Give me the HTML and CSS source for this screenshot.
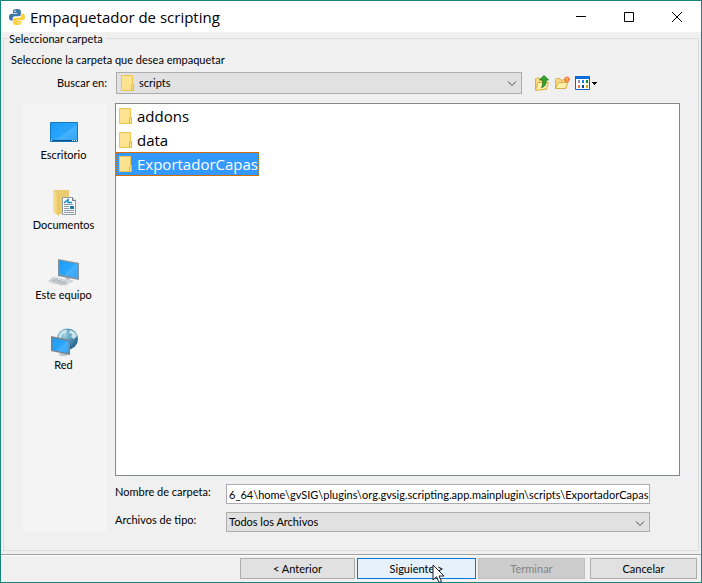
FILE: index.html
```html
<!DOCTYPE html>
<html lang="es">
<head>
<meta charset="utf-8">
<title>Empaquetador de scripting</title>
<link rel="stylesheet" href="styles.css">
</head>
<body>
<svg class="defs" aria-hidden="true">
  <defs>
    <linearGradient id="paper" x1="0" y1="0" x2="1" y2="1"><stop offset="0" stop-color="#ffe594"/><stop offset="1" stop-color="#fce08a"/></linearGradient>
    <linearGradient id="screen" x1="0" y1="0" x2="1" y2="1"><stop offset="0" stop-color="#1b9cf8"/><stop offset=".55" stop-color="#2ba6fb"/><stop offset=".56" stop-color="#45b2fd"/><stop offset="1" stop-color="#2fa5f8"/></linearGradient>
    <linearGradient id="flap" x1="0" y1="0" x2="1" y2="0"><stop offset="0" stop-color="#fbe6a2"/><stop offset="1" stop-color="#e9c25c"/></linearGradient>
    <radialGradient id="globe" cx=".35" cy=".3" r=".8"><stop offset="0" stop-color="#a6d3e6"/><stop offset=".5" stop-color="#4d94b6"/><stop offset="1" stop-color="#1d5c80"/></radialGradient>
    <symbol id="folder" viewBox="0 0 14 16">
      <path d="M.5.5h11v9h1v6H.5z" fill="url(#paper)" stroke="#efc64f"/>
      <path d="M10.500 15.500v-5l2-1v6z" fill="#ffe48c" stroke="#e5b93c"/>
    </symbol>
  </defs>
</svg>
<div class="window">
  <header class="titlebar">
    <svg class="logo" viewBox="0 0 16 16" aria-hidden="true">
      <path d="M8 0C5 0 4 .8 4 2.300V4h4.200v.7H2.500C.8 4.700 0 6 0 8s.8 3.600 2.200 3.600h1.500V9.500c0-1.300 1-2.200 2.300-2.200h3.700c1.200 0 2.200-.9 2.200-2v-3C11.900.8 10.500 0 8 0z" fill="#3b78a8"/>
      <path d="M8 16c3 0 4-.8 4-2.300V12H7.800v-.7h5.700c1.700 0 2.500-1.300 2.500-3.300s-.8-3.600-2.200-3.600h-1.500v2.100c0 1.300-1 2.200-2.300 2.200H6.300c-1.200 0-2.200.9-2.200 2v3C4.100 15.200 5.500 16 8 16z" fill="#fdd13e"/>
      <circle cx="6" cy="2.200" r=".8" fill="#fff"/><circle cx="10" cy="13.800" r=".8" fill="#fff"/>
    </svg>
    <h1>Empaquetador de scripting</h1>
    <div class="window-controls">
      <button type="button" aria-label="Minimizar"><svg viewBox="0 0 12 12"><path d="M1 5.500h10"/></svg></button>
      <button type="button" aria-label="Maximizar"><svg viewBox="0 0 12 12"><path d="M1.500 1.500h9v9h-9z"/></svg></button>
      <button type="button" aria-label="Cerrar"><svg viewBox="0 0 12 12"><path d="M1 1l10 10M11 1L1 11"/></svg></button>
    </div>
  </header>
  <form class="dialog">
    <section class="group" role="group" aria-labelledby="group-title">
      <h2 id="group-title">Seleccionar carpeta</h2>
      <p class="hint">Seleccione la carpeta que desea empaquetar</p>
      <div class="lookup">
        <label for="location">Buscar en:</label>
        <div class="combo with-icon">
          <svg class="folder" aria-hidden="true"><use href="#folder"/></svg>
          <select id="location"><option>scripts</option></select>
          <svg class="arrow" viewBox="0 0 10 6" aria-hidden="true"><path d="M1 .5l4 4 4-4"/></svg>
        </div>
        <div class="tools">
          <button type="button" aria-label="Subir un nivel"><svg width="16" height="16" viewBox="0 0 16 16">
            <path d="M.5 14.500V4l1-1h3l1 1.500H11v10z" fill="#f8dc80" stroke="#dcae44"/>
            <path d="M.5 15.500L3 7.500h10.500l-2 6.500z" fill="#fdf0a8" stroke="#dcae44"/>
            <path d="M4.500 5l4.500-4.500L13.500 5h-2.500c.4 4-.8 6.500-4.500 7.500 1.300-2 1.600-4.500 1-7.500z" fill="#35a52c" stroke="#14701a" stroke-width=".8"/>
          </svg></button>
          <button type="button" aria-label="Crear carpeta"><svg width="16" height="16" viewBox="0 0 16 16">
            <path d="M.5 13.500V4.500l1-1h3l1 1.500H11v8.500z" fill="#f8dc80" stroke="#dcae44"/>
            <path d="M.5 13.500L3.500 7.500H13l-2.500 6z" fill="#fdf0a8" stroke="#dcae44"/>
            <path d="M12 1.500v6M9 4.500h6M9.800 2.300l4.400 4.400M14.200 2.300L9.800 6.700" stroke="#f4602f" stroke-width="1.200"/>
            <circle cx="12" cy="4.500" r="1.200" fill="#ffc83c"/>
          </svg></button>
          <button type="button" aria-label="Ver"><svg width="22" height="16" viewBox="0 0 22 16">
            <path d="M.5 1.500h14v13H.5z" fill="#fff" stroke="#0a64cc"/><path d="M0 1h15v3H0z" fill="#0a6cd6"/>
            <path d="M3 5h2v3H3z" fill="#8d91b8"/><path d="M7 5h2v3H7z" fill="#1d7ce8"/><path d="M11 5h2v3h-2z" fill="#0b8a20"/>
            <path d="M3 10h2v3H3z" fill="#f0764a"/><path d="M7 10h2v3H7z" fill="#123b9a"/><path d="M11 10h2v3h-2z" fill="#e0a418"/>
            <path d="M17 7h5v1h-1v1h-1v1h-1V9h-1V8h-1z"/>
          </svg></button>
        </div>
      </div>
      <div class="browser">
        <nav class="places" aria-label="Lugares">
          <button type="button"><svg viewBox="0 0 32 32" aria-hidden="true">
            <path d="M2.500 6.500h27v19h-27z" fill="url(#screen)" stroke="#1579bd"/>
            <path d="M3 24h26v1H3z" fill="#0b4f85"/><path d="M3 24h1v1H3zM24 24h1v1h-1zM26 24h1v1h-1zM28 24h1v1h-1z" fill="#fff"/>
          </svg>Escritorio</button>
          <button type="button"><svg viewBox="0 0 32 32" aria-hidden="true">
            <path d="M5 4h16v24H9z" fill="#eccb70"/>
            <path d="M5 4l6 4v22l-6-4z" fill="url(#flap)"/>
            <path d="M14.500 11.500h10l3 3v14h-13z" fill="#fdfefe" stroke="#929ca3"/>
            <path d="M24.500 11.500v3h3" fill="#dde3e7" stroke="#69747c"/>
            <path d="M16 17l4-3.500v3h4" fill="none" stroke="#1687c5" stroke-width="1.400"/>
            <path d="M16 18.500h9M16 20.500h5M16 22.500h5M16 24.500h10M16 26.500h10" stroke="#8e9ba7"/>
            <path d="M22 20h4v3h-4z" fill="#2077ac"/>
          </svg>Documentos</button>
          <button type="button"><svg viewBox="0 0 32 32" aria-hidden="true">
            <path d="M17 21h5v3l4 1-4 2h-7l-1-2 4-1z" fill="#bdc6cc"/>
            <path d="M10 3l21 4v17l-21-4z" fill="#82919b"/>
            <path d="M11.500 4.500l18 3.500v14l-18-3.500z" fill="url(#screen)"/>
            <path d="M0 25l7-4 17 4-6 5z" fill="#d6dadd"/>
            <path d="M3 24l15 4M5 23l15 4M2 26l13 3M6 21l-5 4M10 22l-5 4M14 23l-5 4M18 24l-5 5" stroke="#9da7ae" stroke-width=".6"/>
          </svg>Este equipo</button>
          <button type="button"><svg viewBox="0 0 32 32" aria-hidden="true">
            <circle cx="19.500" cy="13" r="10.500" fill="url(#globe)"/>
            <path d="M11 9c2-4 5-5 8-5l-1 3-4 1-1 4-3 1zM22 4c4 1 6 3 7 6l-3 3-3-2 1-3-3-1z" fill="#e0f0ee" opacity=".85"/>
            <path d="M13 25h5v2l3 1-3 2h-6l-1-2 2-1z" fill="#bdc6cc"/>
            <path d="M3 10l19 4v15L3 25z" fill="#74848f"/>
            <path d="M4.500 12l16 3.300v12L4.500 24z" fill="url(#screen)"/>
          </svg>Red</button>
        </nav>
        <div class="main">
          <ul class="files" role="listbox" aria-label="Carpetas">
            <li role="option" aria-selected="false"><svg class="folder" aria-hidden="true"><use href="#folder"/></svg>addons</li>
            <li role="option" aria-selected="false"><svg class="folder" aria-hidden="true"><use href="#folder"/></svg>data</li>
            <li role="option" aria-selected="true"><svg class="folder" aria-hidden="true"><use href="#folder"/></svg>ExportadorCapas</li>
          </ul>
          <div class="fields">
            <label for="name">Nombre de carpeta:</label>
            <input id="name" type="text" value="6_64\home\gvSIG\plugins\org.gvsig.scripting.app.mainplugin\scripts\ExportadorCapas">
            <label for="type">Archivos de tipo:</label>
            <div class="combo">
              <select id="type"><option>Todos los Archivos</option></select>
              <svg class="arrow" viewBox="0 0 10 6" aria-hidden="true"><path d="M1 .5l4 4 4-4"/></svg>
            </div>
          </div>
        </div>
      </div>
    </section>
    <footer class="actions">
      <button type="button" class="back">&lt; Anterior</button>
      <button type="button" class="next">Siguiente &gt;
        <svg class="pointer" viewBox="0 0 13 20" aria-hidden="true"><path d="M1 1v15l3.500-3.300L7 18.500l2.500-1-2.500-5.500h5z" fill="#fff" stroke="#1c2030"/></svg>
      </button>
      <button type="button" class="finish" disabled>Terminar</button>
      <button type="button" class="cancel">Cancelar</button>
    </footer>
  </form>
</div>
</body>
</html>
```
FILE: styles.css
```css
* { box-sizing: border-box; }

body {
  margin: 0;
  background: #f0f0f0;
  color: #000;
  font: 11px/14px Lato, "DejaVu Sans", sans-serif;
}

button, input, select { font: inherit; color: inherit; }
button { padding: 0; border: 0; background: none; }
.defs { position: absolute; width: 0; height: 0; }

.window {
  display: flex;
  flex-direction: column;
  min-height: 100vh;
  border: 1px solid #16877b;
}

.titlebar {
  display: flex;
  align-items: center;
  height: 31px;
  padding-left: 8px;
  background: #fff;
}
.logo { width: 16px; height: 16px; }
h1 {
  flex: 1;
  margin: 0 0 0 5px;
  font: 15px/20px "Open Sans", "Noto Sans", sans-serif;
}
.window-controls { display: flex; }
.window-controls button { display: grid; place-items: center; width: 48px; height: 30px; }
.window-controls svg { width: 12px; height: 12px; fill: none; stroke: #000; }

.dialog { display: flex; flex: 1; flex-direction: column; }

.group {
  display: flex;
  flex: 1;
  flex-direction: column;
  margin: 6px 2px 3px;
  padding: 0 18px 18px 7px;
  border: 1px solid #dcdcdc;
}
.group h2 {
  align-self: flex-start;
  margin: -7px 0 0 -3px;
  padding: 0 3px 0 1px;
  background: #f0f0f0;
  font: inherit;
}
.hint { margin: 7px 0 5px; }

.lookup {
  display: grid;
  grid-template-columns: 96px minmax(0, 406px) auto;
  column-gap: 9px;
  align-items: center;
}
.lookup > label { text-align: right; }
.tools { display: flex; gap: 4px; margin-left: 4px; }
.tools svg { display: block; }

.combo { position: relative; min-width: 0; }
.combo select {
  display: block;
  width: 100%;
  height: 20px;
  padding: 0 20px 0 2px;
  border: 1px solid #adadad;
  border-radius: 0;
  background: #e1e1e1;
  appearance: none;
}
.combo.with-icon select { height: 22px; padding-left: 22px; }
.folder { width: 14px; height: 16px; }
.combo .folder { position: absolute; top: 3px; left: 5px; }
.arrow {
  position: absolute;
  top: 9px;
  right: 5px;
  width: 10px;
  height: 6px;
  fill: none;
  stroke: #444;
  pointer-events: none;
}

.browser { display: flex; flex: 1; gap: 8px; margin: 9px 0 0 11px; }
.places {
  display: flex;
  flex: 0 0 85px;
  flex-direction: column;
  gap: 24px;
  padding: 13px 2px 0 0;
  background: #f4f4f4;
}
.places button { display: flex; flex-direction: column; align-items: center; }
.places svg { width: 32px; height: 32px; }

.main { display: flex; flex: 1; flex-direction: column; min-width: 0; gap: 8px; }
.files {
  flex: 1;
  margin: 0;
  padding: 0;
  border: 1px solid #828790;
  background: #fff;
  list-style: none;
  font: 15px/24px "Open Sans", "Noto Sans", sans-serif;
}
.files li {
  display: flex;
  align-items: center;
  gap: 4px;
  width: max-content;
  height: 24px;
  padding-left: 2px;
  border: 1px solid transparent;
}
.files [aria-selected="true"] { border: 1px dotted #cc6600; background: #3399ff; color: #fff; }

.fields {
  display: grid;
  grid-template-columns: 111px 1fr;
  row-gap: 8px;
  margin-right: 30px;
}
.fields label { padding-top: 1px; }
.fields input {
  width: 100%;
  height: 20px;
  padding: 0 0 0 2px;
  border: 1px solid #abadb3;
  background: #fff;
}

.actions {
  display: flex;
  justify-content: flex-end;
  gap: 2px;
  padding: 3px 4px;
  border-top: 1px solid #a0a0a0;
  box-shadow: inset 0 1px #fff;
}
.actions button {
  width: 107px;
  height: 21px;
  border: 1px solid #adadad;
  background: #e1e1e1;
}
.actions .back { width: 115px; }
.actions .next { position: relative; width: 119px; border-color: #0078d7; background: #e5f1fb; }
.actions .finish { border-color: #bfbfbf; background: #cccccc; color: #838383; }
.actions .cancel { margin-left: 3px; }
.pointer { position: absolute; top: 5px; left: 74px; width: 13px; height: 20px; }
```
